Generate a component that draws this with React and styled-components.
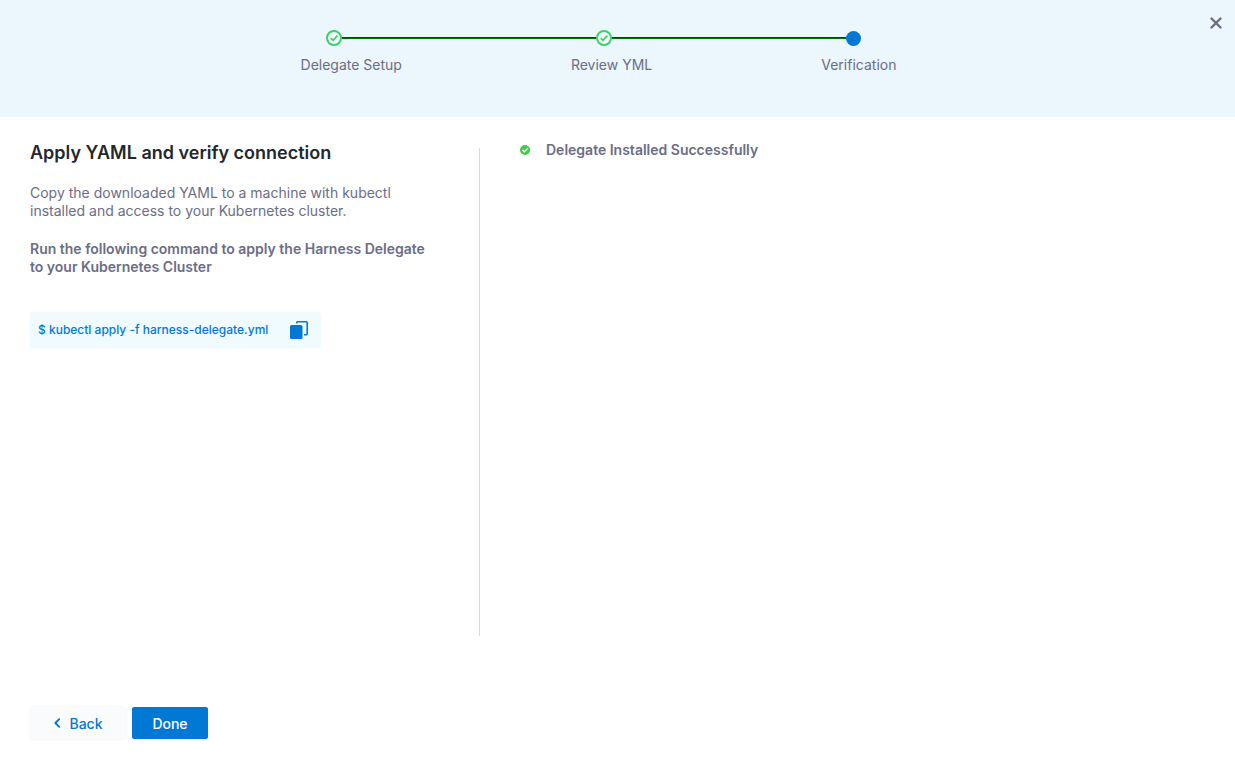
import React from 'react';
import styled, { createGlobalStyle } from 'styled-components';

const GlobalStyle = createGlobalStyle`
  * { box-sizing: border-box; }
  body {
    margin: 0;
    background: #ffffff;
    color: #6b6d85;
    font-family: Inter, "Liberation Sans", sans-serif;
    font-size: 14px;
    line-height: 18px;
  }
  h1, p, ol { margin: 0; padding: 0; }
  button { font-family: inherit; border: 0; cursor: pointer; }
`;

const Page = styled.div`
  display: flex;
  flex-direction: column;
  min-height: 100vh;
`;

const Header = styled.header`
  display: flex;
  align-items: flex-start;
  min-height: 117px;
  background: #ebf6fd;
`;

const Steps = styled.ol`
  display: flex;
  flex: 1;
  justify-content: center;
  padding-top: 30px;
  list-style: none;
`;

const Step = styled.li`
  display: flex;
  flex-direction: column;
  gap: 10px;
`;

const Track = styled.div`
  display: flex;
  align-items: center;
  height: 16px;
  margin-left: 25px;
  margin-right: ${({ $last }) => ($last ? '0' : '-25px')};
`;

const Connector = styled.span`
  flex: 1;
  height: 2px;
  background: #007600;
  border-top: 1px solid #004a00;
`;

const CurrentDot = styled.span`
  width: 15px;
  height: 15px;
  border-radius: 50%;
  background: #0278d5;
`;

const StepLabel = styled.span`
  padding-right: ${({ $last }) => ($last ? '0' : '169px')};
  white-space: nowrap;
`;

const CloseButton = styled.button`
  display: flex;
  align-items: center;
  justify-content: center;
  width: 38px;
  height: 46px;
  padding: 0;
  background: transparent;
`;

const Content = styled.main`
  display: flex;
  flex: 1;
  padding: 31px 30px 0;
`;

const Instructions = styled.section`
  flex: 0 0 450px;
  padding-right: 48px;
  border-right: 1px solid #d9dae5;
`;

const Title = styled.h1`
  color: #22272d;
  font-size: 18px;
  font-weight: 600;
  line-height: 22px;
  margin-top: -6px;
`;

const Paragraph = styled.p`
  margin-top: 20px;
  font-weight: ${({ $strong }) => ($strong ? 600 : 400)};
`;

const Command = styled.div`
  display: inline-flex;
  align-items: center;
  gap: 21px;
  height: 36px;
  margin-top: 36px;
  padding: 0 12px 0 8px;
  border-radius: 4px;
  background: #effbff;
  box-shadow: 0 0 2px rgba(40, 41, 61, 0.06);
  color: #0278d5;
  font-size: 12px;
  font-weight: 500;
`;

const CommandText = styled.code`
  font-family: inherit;
`;

const CopyButton = styled.button`
  display: flex;
  padding: 0;
  background: transparent;
`;

const Status = styled.section`
  display: flex;
  flex: 1;
  align-items: flex-start;
  padding-left: 40px;
`;

const StatusLine = styled.p`
  display: flex;
  align-items: center;
  gap: 16px;
  margin-top: -7px;
  font-weight: 600;
`;

const Footer = styled.footer`
  display: flex;
  gap: 6px;
  padding: 71px 30px 20px;
`;

const Button = styled.button`
  display: flex;
  align-items: center;
  justify-content: center;
  gap: 8px;
  width: ${({ $primary }) => ($primary ? '76px' : '96px')};
  height: 32px;
  padding: 0;
  border-radius: ${({ $primary }) => ($primary ? '2px' : '4px')};
  background: ${({ $primary }) => ($primary ? '#0278d5' : '#fafbfc')};
  color: ${({ $primary }) => ($primary ? '#ffffff' : '#0278d5')};
  box-shadow: ${({ $primary }) => ($primary ? 'none' : '0 0 3px rgba(40, 41, 61, 0.08)')};
  font-size: 14px;
  font-weight: 500;
`;

const DoneMark = () => (
  <svg width="16" height="16" viewBox="0 0 16 16" fill="none" aria-hidden="true">
    <circle cx="8" cy="8" r="7" fill="#f3fbfb" stroke="#3dcf6a" strokeWidth="2" />
    <path d="M4.6 8.2L7 10.3L11.4 5.6" stroke="#3dcf6a" strokeWidth="1.7" />
  </svg>
);

const CrossIcon = () => (
  <svg width="14" height="14" viewBox="0 0 14 14" fill="none" aria-hidden="true">
    <path d="M2.5 2.5L11.5 11.5M11.5 2.5L2.5 11.5" stroke="#6b6d85" strokeWidth="2.4" strokeLinecap="round" />
  </svg>
);

const CopyIcon = () => (
  <svg width="20" height="20" viewBox="0 0 20 20" fill="none" aria-hidden="true">
    <path d="M7.7 3.4V2.8Q7.7 1.8 8.7 1.8H17.2Q18.2 1.8 18.2 2.8V13.8Q18.2 14.8 17.2 14.8H15" stroke="#0278d5" strokeWidth="1.6" />
    <rect x="1" y="5" width="12.5" height="14" rx="1.5" fill="#0278d5" />
  </svg>
);

const SuccessIcon = () => (
  <svg width="10" height="10" viewBox="0 0 10 10" fill="none" aria-hidden="true">
    <circle cx="5" cy="5" r="5" fill="#42c94b" />
    <path d="M2.4 5L4.3 6.8L7.6 3.4" stroke="#ffffff" strokeWidth="1.4" />
  </svg>
);

const ChevronIcon = () => (
  <svg width="8" height="10" viewBox="0 0 8 10" fill="none" aria-hidden="true">
    <path d="M6.2 1.2L2.4 5L6.2 8.8" stroke="#0278d5" strokeWidth="1.9" strokeLinecap="round" strokeLinejoin="round" />
  </svg>
);

const steps = ['Delegate Setup', 'Review YML', 'Verification'];

export default function App() {
  return (
    <>
      <GlobalStyle />
      <Page>
        <Header>
          <Steps>
            {steps.map((label, i) => {
              const last = i === steps.length - 1;
              return (
                <Step key={label} aria-current={last ? 'step' : undefined}>
                  <Track $last={last}>
                    {last ? <CurrentDot /> : <DoneMark />}
                    {!last && <Connector />}
                  </Track>
                  <StepLabel $last={last}>{label}</StepLabel>
                </Step>
              );
            })}
          </Steps>
          <CloseButton type="button" aria-label="Close">
            <CrossIcon />
          </CloseButton>
        </Header>
        <Content>
          <Instructions>
            <Title>Apply YAML and verify connection</Title>
            <Paragraph>
              Copy the downloaded YAML to a machine with kubectl installed and access to your Kubernetes cluster.
            </Paragraph>
            <Paragraph $strong>
              Run the following command to apply the Harness Delegate to your Kubernetes Cluster
            </Paragraph>
            <Command>
              <CommandText>$ kubectl apply -f harness-delegate.yml</CommandText>
              <CopyButton type="button" aria-label="Copy command">
                <CopyIcon />
              </CopyButton>
            </Command>
          </Instructions>
          <Status>
            <StatusLine role="status">
              <SuccessIcon />
              Delegate Installed Successfully
            </StatusLine>
          </Status>
        </Content>
        <Footer>
          <Button type="button">
            <ChevronIcon />
            Back
          </Button>
          <Button type="button" $primary>Done</Button>
        </Footer>
      </Page>
    </>
  );
}
